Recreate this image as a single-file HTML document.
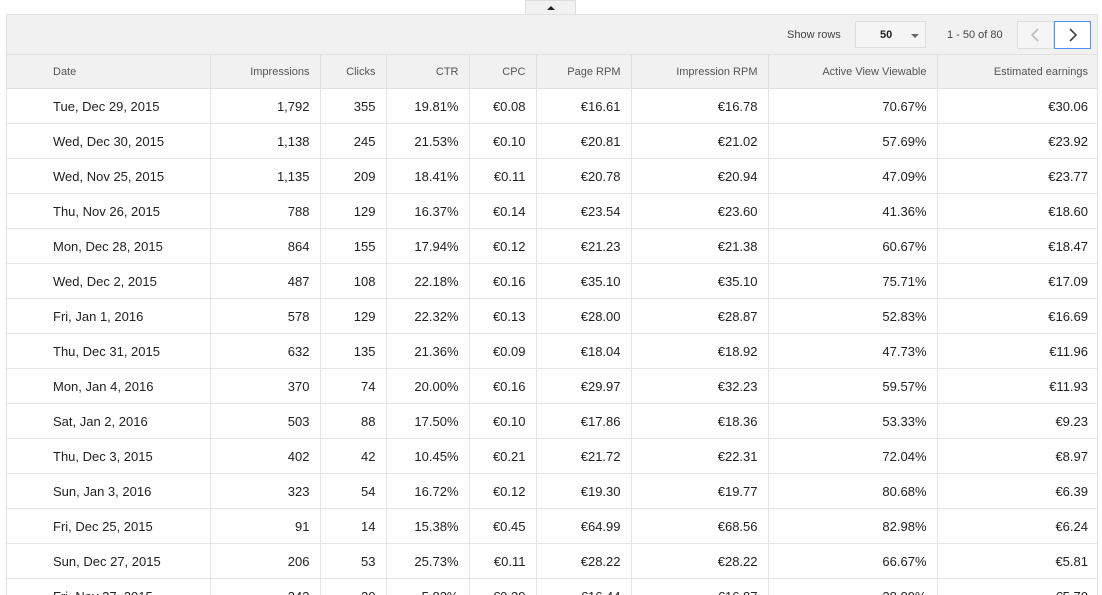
<!DOCTYPE html>
<html><head><meta charset="utf-8"><style>
html,body{margin:0;background:#fff;font-family:"Liberation Sans",Arial,sans-serif;width:1102px;height:595px;overflow:hidden;position:relative}
.tab{position:absolute;left:525px;top:0;width:51px;height:14px;background:#f1f1f1;border:1px solid #ddd;border-bottom:none;box-sizing:border-box}
.tab:after{content:"";position:absolute;left:21px;top:5px;border-left:4px solid transparent;border-right:4px solid transparent;border-bottom:4px solid #222}
.wrap{position:absolute;left:6px;top:14px;width:1092px;height:581px;border:1px solid #e0e0e0;border-bottom:none;box-sizing:border-box;overflow:hidden}
.bar{height:39px;background:#f1f1f1;border-bottom:1px solid #e0e0e0;position:relative;font-size:11px;color:#444}
.sr{position:absolute;left:780px;top:14px}
.sel{position:absolute;left:848px;top:6px;width:71px;height:27px;border:1px solid #ddd;box-sizing:border-box;background:#f5f5f5;font-weight:bold;color:#222}
.sel span{position:absolute;left:24px;top:7px}
.sel:after{content:"";position:absolute;right:6px;top:12px;border-left:4px solid transparent;border-right:4px solid transparent;border-top:4px solid #666}
.cnt{position:absolute;left:940px;top:14px}
.btn{position:absolute;top:6px;width:37px;height:28px;box-sizing:border-box;border:1px solid #ddd;background:#f5f5f5}
table{border-collapse:collapse;table-layout:fixed;width:1091px;font-size:13px;color:#222}
td,th{height:34px;border-right:1px solid #e5e5e5;border-bottom:1px solid #e5e5e5;text-align:right;padding:0 10px 0 0;white-space:nowrap;overflow:hidden}
th{height:33px;font-size:11px;font-weight:normal;color:#555;background:#f1f1f1;border-color:#e0e0e0}
td:first-child,th:first-child{text-align:left;padding-left:46px}
td:last-child,th:last-child{border-right:none}
</style></head><body>
<div class="tab"></div>
<div class="wrap">
<div class="bar">
<span class="sr">Show rows</span>
<div class="sel"><span>50</span></div>
<span class="cnt">1 - 50 of 80</span>
<div class="btn" style="left:1010px"><svg width="35" height="26"><path d="M20 7 L14 13 L20 19" fill="none" stroke="#bbb" stroke-width="1.6"/></svg></div>
<div class="btn" style="left:1047px;border-color:#4d90fe;background:#fff"><svg width="35" height="26"><path d="M15 7 L21 13 L15 19" fill="none" stroke="#444" stroke-width="1.6"/></svg></div>
</div>
<table>
<colgroup><col style="width:203px"><col style="width:110px"><col style="width:66px"><col style="width:83px"><col style="width:67px"><col style="width:95px"><col style="width:137px"><col style="width:169px"><col style="width:161px"></colgroup>
<tr><th>Date</th><th>Impressions</th><th>Clicks</th><th>CTR</th><th>CPC</th><th>Page RPM</th><th>Impression RPM</th><th>Active View Viewable</th><th>Estimated earnings</th></tr>
<tr><td>Tue, Dec 29, 2015</td><td>1,792</td><td>355</td><td>19.81%</td><td>€0.08</td><td>€16.61</td><td>€16.78</td><td>70.67%</td><td>€30.06</td></tr>
<tr><td>Wed, Dec 30, 2015</td><td>1,138</td><td>245</td><td>21.53%</td><td>€0.10</td><td>€20.81</td><td>€21.02</td><td>57.69%</td><td>€23.92</td></tr>
<tr><td>Wed, Nov 25, 2015</td><td>1,135</td><td>209</td><td>18.41%</td><td>€0.11</td><td>€20.78</td><td>€20.94</td><td>47.09%</td><td>€23.77</td></tr>
<tr><td>Thu, Nov 26, 2015</td><td>788</td><td>129</td><td>16.37%</td><td>€0.14</td><td>€23.54</td><td>€23.60</td><td>41.36%</td><td>€18.60</td></tr>
<tr><td>Mon, Dec 28, 2015</td><td>864</td><td>155</td><td>17.94%</td><td>€0.12</td><td>€21.23</td><td>€21.38</td><td>60.67%</td><td>€18.47</td></tr>
<tr><td>Wed, Dec 2, 2015</td><td>487</td><td>108</td><td>22.18%</td><td>€0.16</td><td>€35.10</td><td>€35.10</td><td>75.71%</td><td>€17.09</td></tr>
<tr><td>Fri, Jan 1, 2016</td><td>578</td><td>129</td><td>22.32%</td><td>€0.13</td><td>€28.00</td><td>€28.87</td><td>52.83%</td><td>€16.69</td></tr>
<tr><td>Thu, Dec 31, 2015</td><td>632</td><td>135</td><td>21.36%</td><td>€0.09</td><td>€18.04</td><td>€18.92</td><td>47.73%</td><td>€11.96</td></tr>
<tr><td>Mon, Jan 4, 2016</td><td>370</td><td>74</td><td>20.00%</td><td>€0.16</td><td>€29.97</td><td>€32.23</td><td>59.57%</td><td>€11.93</td></tr>
<tr><td>Sat, Jan 2, 2016</td><td>503</td><td>88</td><td>17.50%</td><td>€0.10</td><td>€17.86</td><td>€18.36</td><td>53.33%</td><td>€9.23</td></tr>
<tr><td>Thu, Dec 3, 2015</td><td>402</td><td>42</td><td>10.45%</td><td>€0.21</td><td>€21.72</td><td>€22.31</td><td>72.04%</td><td>€8.97</td></tr>
<tr><td>Sun, Jan 3, 2016</td><td>323</td><td>54</td><td>16.72%</td><td>€0.12</td><td>€19.30</td><td>€19.77</td><td>80.68%</td><td>€6.39</td></tr>
<tr><td>Fri, Dec 25, 2015</td><td>91</td><td>14</td><td>15.38%</td><td>€0.45</td><td>€64.99</td><td>€68.56</td><td>82.98%</td><td>€6.24</td></tr>
<tr><td>Sun, Dec 27, 2015</td><td>206</td><td>53</td><td>25.73%</td><td>€0.11</td><td>€28.22</td><td>€28.22</td><td>66.67%</td><td>€5.81</td></tr>
<tr><td>Fri, Nov 27, 2015</td><td>343</td><td>20</td><td>5.83%</td><td>€0.29</td><td>€16.44</td><td>€16.87</td><td>28.89%</td><td>€5.70</td></tr>
</table>
</div>
</body></html>
